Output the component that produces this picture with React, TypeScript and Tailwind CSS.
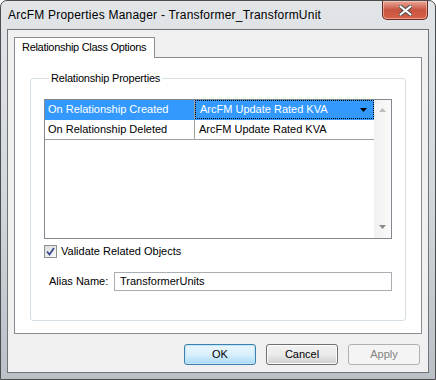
import React from 'react';

const font = "font-['Liberation_Sans',Arial,sans-serif]";

const CloseButton: React.FC = () => (
  <div className="absolute top-0 right-[7px] w-[46px] h-[19px] rounded-b-[5px] border border-t-0 border-[#6b2a22] bg-gradient-to-b from-[#e9a99c] via-[#c8533f] to-[#d7624b] flex items-center justify-center shadow-[inset_0_0_0_1px_rgba(255,220,210,0.5)]">
    <svg width="13" height="11" viewBox="0 0 13 11">
      <path d="M1.5 1.5 L11.5 9.5 M11.5 1.5 L1.5 9.5" stroke="#4a4a4a" strokeWidth="4" strokeLinecap="round" />
      <path d="M1.5 1.5 L11.5 9.5 M11.5 1.5 L1.5 9.5" stroke="#ffffff" strokeWidth="2.2" strokeLinecap="round" />
    </svg>
  </div>
);

const Checkbox: React.FC = () => (
  <div className="w-[13px] h-[13px] border border-[#8e8f8f] bg-gradient-to-br from-[#dcdcdc] to-[#fbfbfb] flex items-center justify-center">
    <svg width="9" height="9" viewBox="0 0 9 9">
      <path d="M1 4.5 L3.5 7.5 L8 1" fill="none" stroke="#3a4a8e" strokeWidth="1.8" />
    </svg>
  </div>
);

const GridRow: React.FC<{ event: string; handler: string; selected?: boolean }> = ({ event, handler, selected }) => (
  <div className={`flex h-[20px] border-b ${selected ? 'bg-[#3399ff] text-white border-[#3399ff]' : 'bg-white text-black border-[#a0a0a0]'}`}>
    <div className="w-[150px] border-r border-[#a0a0a0] pl-[3px] flex items-center">{event}</div>
    <div className={`flex-1 flex items-center pl-[4px] pr-[6px] ${selected ? 'border border-dotted border-black' : ''}`}>
      <span className="flex-1">{handler}</span>
      {selected && (
        <svg width="7" height="4" viewBox="0 0 7 4">
          <path d="M0 0 H7 L3.5 4 Z" fill="#000" />
        </svg>
      )}
    </div>
  </div>
);

const Button: React.FC<{ label: string; variant: 'default' | 'normal' | 'disabled' }> = ({ label, variant }) => {
  const styles = {
    default: 'border-[#3c7fb1] bg-gradient-to-b from-[#eaf6fd] via-[#d9f0fc] to-[#a7d9f5] text-black shadow-[inset_0_0_0_1px_#c4e5f6]',
    normal: 'border-[#707070] bg-gradient-to-b from-[#f2f2f2] via-[#ebebeb] to-[#cfcfcf] text-black shadow-[inset_0_0_0_1px_#fcfcfc]',
    disabled: 'border-[#adb2b5] bg-[#f4f4f4] text-[#838383]',
  }[variant];
  return (
    <div className={`w-[72px] h-[21px] rounded-[3px] border flex items-center justify-center ${styles}`}>
      {label}
    </div>
  );
};

export default function App() {
  return (
    <div className={`w-[436px] h-[380px] bg-white ${font} text-[11px] leading-[13px]`}>
      <div className="relative w-full h-full rounded-t-[7px] border border-[#4d4d4d] bg-gradient-to-b from-[#e2e5e8] via-[#d3d8dd] to-[#b9c0c7] flex flex-col">
        <div className="h-[28px] pl-[7px] flex items-center text-[12px] tracking-[0.22px] text-black">
          ArcFM Properties Manager - Transformer_TransformUnit
        </div>
        <CloseButton />

        <div className="mx-[6px] mb-[6px] flex-1 border border-[#6f7479] bg-[#f0f0f0] flex flex-col pt-[7px] px-[6px]">
          <div className="w-[141px] h-[21px] -mb-px relative z-10 border border-b-0 border-[#898c95] bg-white flex items-center pl-[7px] pb-[1px] tracking-[-0.3px]">
            Relationship Class Options
          </div>
          <div className="h-[277px] border border-[#898c95] bg-white px-[15px]">
            <fieldset className="mt-[14px] h-[249px] border border-[#d5dfe5] rounded-[3px] px-[13px]">
              <legend className="ml-[5px] px-[2px] text-black tracking-[-0.2px]">Relationship Properties</legend>
              <div className="mt-[14px] h-[140px] border border-[#828790] bg-white flex">
                <div className="flex-1">
                  <GridRow event="On Relationship Created" handler="ArcFM Update Rated KVA" selected />
                  <GridRow event="On Relationship Deleted" handler="ArcFM Update Rated KVA" />
                </div>
                <div className="w-[17px] bg-gradient-to-r from-[#f1f1f1] to-[#fafafa] flex flex-col items-center justify-between pt-[8px] pb-[9px]">
                  <svg width="7" height="4" viewBox="0 0 7 4">
                    <path d="M0 4 H7 L3.5 0 Z" fill="#bcbcbc" />
                  </svg>
                  <svg width="7" height="4" viewBox="0 0 7 4">
                    <path d="M0 0 H7 L3.5 4 Z" fill="#8a8a8a" />
                  </svg>
                </div>
              </div>
              <div className="mt-[6px] flex items-center gap-[4px]">
                <Checkbox />
                <span>Validate Related Objects</span>
              </div>
              <div className="mt-[14px] flex items-center">
                <span className="w-[70px] pl-[5px]">Alias Name:</span>
                <div className="flex-1 h-[19px] border border-[#abadb3] bg-white flex items-center pl-[5px]">
                  TransformerUnits
                </div>
              </div>
            </fieldset>
          </div>
          <div className="mt-[10px] flex justify-end gap-[10px] pr-[2px]">
            <Button label="OK" variant="default" />
            <Button label="Cancel" variant="normal" />
            <Button label="Apply" variant="disabled" />
          </div>
        </div>
      </div>
    </div>
  );
}
